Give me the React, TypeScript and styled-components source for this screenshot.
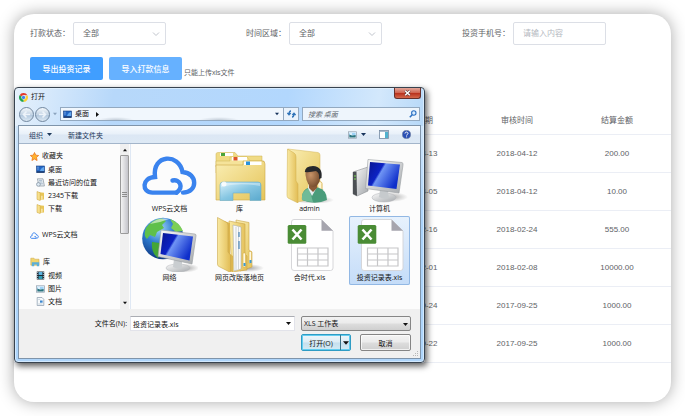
import React from "react";
import styled, { createGlobalStyle } from "styled-components";

const PAGE_FONT = '"Liberation Sans", "Noto Sans CJK SC", sans-serif';
const DIALOG_FONT = '"Open Sans", "Noto Sans CJK SC", sans-serif';

const GlobalStyle = createGlobalStyle`
  *, *::before, *::after { box-sizing: border-box; }
  body { margin: 0; background: #fff; font-family: ${PAGE_FONT}; }
  button, input, select { font-family: inherit; margin: 0; }
  svg { display: block; flex: none; }
`;

/* ---------- page ---------- */

const Page = styled.div`
  padding: 14px;
`;

const Card = styled.main`
  position: relative;
  padding: 8px 0 39px;
  border-radius: 20px;
  background: #fff;
  box-shadow: 0 0 16px rgba(0, 0, 0, 0.34);
  font-size: 8px;
  line-height: 12px;
  color: #606266;
`;

const Filters = styled.form`
  display: grid;
  grid-template-columns: 1fr 1fr 209px;
  padding-left: 16px;
`;

const Filter = styled.div`
  display: flex;
  align-items: center;
  gap: 3px;
`;

const FieldShell = styled.span`
  position: relative;
  display: block;
  width: 93px;
  svg {
    position: absolute;
    right: 6px;
    top: 8px;
    pointer-events: none;
  }
`;

const fieldStyle = `
  display: block;
  width: 100%;
  height: 23px;
  padding: 0 9px;
  border: 1px solid #dcdfe6;
  border-radius: 2px;
  background: #fff;
  color: #606266;
  font-size: 8px;
  outline: none;
`;

const FilterSelect = styled.select`
  ${fieldStyle}
  appearance: none;
`;

const FilterInput = styled.input`
  ${fieldStyle}
  &::placeholder { color: #b4b8c0; }
`;

const Actions = styled.div`
  display: flex;
  gap: 6px;
  padding: 12px 16px 0;
`;

const ActionButton = styled.button<{ $light?: boolean }>`
  width: 73px;
  height: 23px;
  padding: 0;
  border: 0;
  border-radius: 2px;
  background: ${(p) => (p.$light ? "#66b1ff" : "#409eff")};
  color: #fff;
  font-size: 8px;
  font-weight: 500;
`;

const UploadGroup = styled.div`
  display: flex;
  align-items: flex-end;
  gap: 2px;
`;

const Hint = styled.span`
  font-size: 7px;
  line-height: 14px;
`;

const Records = styled.table`
  width: 100%;
  margin-top: 27px;
  border-collapse: separate;
  border-spacing: 0;
  table-layout: fixed;
  text-align: center;
  th, td {
    height: 38px;
    padding: 0;
    border-bottom: 1px solid #ebeef5;
    font-weight: 400;
  }
  thead th, thead td { height: 28px; }
  th:last-child, td:last-child { padding-right: 4px; }
`;

const SpacerCol = styled.col``;
const DataCol = styled.col<{ $last?: boolean }>`
  width: ${(p) => (p.$last ? "104px" : "100px")};
`;

/* ---------- dialog ---------- */

const Dialog = styled.section`
  position: absolute;
  left: 0;
  top: 73px;
  width: 411px;
  padding: 0 3px 3px;
  border: 1px solid #38434f;
  border-radius: 4px;
  background:
    linear-gradient(100deg, #e6f1fc 0, #b7d8fa 24%, #b2d7fd 66%, #d3e8fc 88%, #b6d8f8 100%) top / 100% 38px no-repeat,
    linear-gradient(#dcecfb, #a9d2fa 50%, #aed5fb);
  box-shadow: inset 0 0 0 1px rgba(235, 247, 255, 0.6), 2px 3px 6px rgba(0, 0, 0, 0.65);
  font-family: ${DIALOG_FONT};
  font-size: 7px;
  line-height: 10px;
  color: #111;
`;

const TitleBar = styled.header`
  display: flex;
  align-items: center;
  gap: 3px;
  height: 18px;
  padding-left: 1px;
`;

const Title = styled.h2`
  flex: 1;
  margin: 0;
  font-size: 7px;
  font-weight: 400;
`;

const CloseButton = styled.button`
  display: grid;
  place-items: center;
  align-self: flex-start;
  width: 27px;
  height: 11px;
  padding: 0;
  border: 1px solid #66302c;
  border-top: 0;
  border-radius: 0 0 3px 3px;
  background: linear-gradient(#e3a79a, #cf6350 48%, #b8301c 52%, #d4684c);
`;

const NavRow = styled.div`
  display: flex;
  align-items: center;
  gap: 3px;
  height: 19px;
  padding: 0 1px 3px;
`;

const HistoryButtons = styled.div`
  display: flex;
  gap: 1px;
`;

const HistoryButton = styled.button`
  display: grid;
  place-items: center;
  width: 15px;
  height: 15px;
  padding: 0;
  border: 1px solid #71879f;
  border-radius: 50%;
  background: linear-gradient(#f4f8fc, #c4d4e4 50%, #b0c6dc 52%, #dbe8f4);
`;

const AddressBar = styled.div`
  display: flex;
  align-items: stretch;
  flex: 1;
  height: 14px;
  border: 1px solid #93a9c0;
  background:
    radial-gradient(ellipse 18px 3px at 55px 100%, #c3cdd8, transparent),
    radial-gradient(ellipse 20px 3px at 158px 100%, #c3cdd8, transparent),
    #f1f7fd;
`;

const Crumb = styled.div`
  display: flex;
  align-items: center;
  flex: 1;
  gap: 3px;
  padding: 0 4px 0 2px;
  svg:nth-of-type(2) { margin-left: 3px; }
  svg:last-child { margin-left: auto; }
`;

const RefreshButton = styled.button`
  display: grid;
  place-items: center;
  width: 15px;
  padding: 0;
  border: 0;
  border-left: 1px solid #93a9c0;
  background: #eaf3fc;
`;

const SearchBox = styled.label`
  display: flex;
  align-items: center;
  width: 118px;
  height: 14px;
  padding: 0 2px 0 5px;
  border: 1px solid #93a9c0;
  background: #eef5fc;
  input {
    flex: 1;
    min-width: 0;
    padding: 0;
    border: 0;
    outline: none;
    background: transparent;
    font-size: 7px;
    font-style: italic;
  }
  input::placeholder { color: #5f6870; }
`;

const Client = styled.div`
  border: 1px solid #7f94aa;
  background: #f0f0f0;
`;

const Toolbar = styled.div`
  display: flex;
  align-items: center;
  gap: 16px;
  height: 18px;
  padding: 0 9px 0 10px;
  border-bottom: 1px solid #a3b5ca;
  background: linear-gradient(#f8fbfe, #e8f0f9 48%, #dce7f4 52%, #dde9f5);
`;

const ToolGroup = styled.div`
  display: flex;
  align-items: center;
  gap: 13px;
  margin-left: auto;
`;

const ToolButton = styled.button`
  display: flex;
  align-items: center;
  gap: 4px;
  padding: 0;
  border: 0;
  background: none;
  color: #1e395b;
  font-size: 7px;
`;

const Browser = styled.div`
  display: flex;
  height: 165px;
  background: #fcfcfc;
`;

const Sidebar = styled.nav`
  display: flex;
  width: 112px;
  border-right: 1px solid #dfe8f4;
`;

const Tree = styled.div`
  display: flex;
  flex-direction: column;
  flex: 1;
  gap: 13px;
  padding: 5px 0 0 11px;
  overflow: hidden;
`;

const TreeGroup = styled.div`
  display: flex;
  flex-direction: column;
`;

const TreeRow = styled.a<{ $child?: boolean }>`
  display: flex;
  align-items: center;
  gap: 3px;
  height: ${(p) => (p.$child ? "13px" : "14px")};
  padding-left: ${(p) => (p.$child ? "6px" : "0")};
  color: #111;
  text-decoration: none;
  white-space: nowrap;
`;

const Scrollbar = styled.div`
  display: flex;
  flex-direction: column;
  align-items: center;
  justify-content: space-between;
  width: 9px;
  margin-right: 1px;
  padding: 4px 0;
  background: #f0f0f0;
`;

const Thumb = styled.div`
  display: grid;
  place-items: center;
  width: 9px;
  height: 79px;
  margin: 3px 0 auto;
  border: 1px solid #9a9a9a;
  border-radius: 1px;
  background: linear-gradient(90deg, #f3f3f3, #dcdcdf 50%, #c4c4ca);
`;

const Files = styled.div`
  display: grid;
  grid-template-columns: repeat(4, 61px);
  align-content: start;
  column-gap: 9px;
  flex: 1;
  padding: 3px 0 0 8px;
`;

const FileTile = styled.button<{ $selected?: boolean }>`
  display: flex;
  flex-direction: column;
  align-items: center;
  height: 69px;
  padding: 0;
  border: 0;
  border-radius: 2px;
  background: ${(p) => (p.$selected ? "linear-gradient(#e8f2fd, #c4dcf8)" : "none")};
  box-shadow: ${(p) => (p.$selected ? "inset 0 0 0 1px #92b8e4" : "none")};
  color: #111;
  font-size: 7px;
  line-height: 12px;
  white-space: nowrap;
`;

const Footer = styled.form`
  position: relative;
  display: flex;
  flex-direction: column;
  gap: 3px;
  height: 49px;
  padding: 7px 9px 0 0;
`;

const NameRow = styled.div`
  display: flex;
  align-items: center;
  gap: 3px;
  label { flex: 1; text-align: right; }
`;

const ComboBox = styled.div`
  display: flex;
  align-items: center;
  width: 165px;
  height: 15px;
  margin-right: 3px;
  padding: 0 3px 0 2px;
  border: 1px solid #e2e3ea;
  border-top-color: #abadb3;
  background: #fff;
  input {
    flex: 1;
    min-width: 0;
    padding: 0;
    border: 0;
    outline: none;
    background: transparent;
    font-size: 7px;
    color: #111;
  }
`;

const PlainButton = styled.button`
  display: grid;
  place-items: center;
  height: 100%;
  padding: 0;
  border: 0;
  background: none;
`;

const TypeShell = styled.div`
  position: relative;
  width: 110px;
  svg {
    position: absolute;
    right: 3px;
    top: 6px;
    pointer-events: none;
  }
  select {
    display: block;
    width: 100%;
    height: 15px;
    padding: 0 2px;
    border: 1px solid #868686;
    border-radius: 2px;
    appearance: none;
    background: linear-gradient(#f2f2f2, #ebebeb 48%, #dddddd 52%, #cfcfcf);
    font-size: 7px;
    color: #111;
  }
`;

const ButtonRow = styled.div`
  display: flex;
  justify-content: flex-end;
  gap: 9px;
`;

const SplitButton = styled.div`
  display: flex;
  width: 50px;
  height: 17px;
  border: 1px solid #2f9cc4;
  border-radius: 2px;
  background: linear-gradient(#eef6fa, #dcecf5 48%, #c5dfed 52%, #d3ebf5);
  box-shadow: inset 0 0 0 1px #63cdf0;
`;

const OpenButton = styled.button`
  flex: 1;
  padding: 0;
  border: 0;
  border-right: 1px solid #3d7388;
  background: none;
  font-size: 7px;
  color: #111;
`;

const OpenMenuButton = styled(PlainButton)`
  width: 9px;
`;

const CancelButton = styled.button`
  width: 51px;
  height: 17px;
  padding: 0;
  border: 1px solid #858585;
  border-radius: 2px;
  background: linear-gradient(#f3f3f3, #ebebeb 48%, #dddddd 52%, #cfcfcf);
  box-shadow: inset 0 0 0 1px rgba(255, 255, 255, 0.7);
  font-size: 7px;
  color: #111;
`;

const Grip = styled.span`
  position: absolute;
  right: 1px;
  bottom: 1px;
`;

/* ---------- small icons ---------- */

const Chevron = () => (
  <svg width="8" height="8" viewBox="0 0 8 8" fill="none" stroke="#c0c4cc" strokeWidth="1">
    <path d="M1 2.5 4 5.5 7 2.5" />
  </svg>
);

const Arrow = ({ dir = "down", size = 5, color = "#111" }: { dir?: "down" | "up" | "right"; size?: number; color?: string }) => {
  const d = { down: "M0 1h5L2.5 4z", up: "M0 4h5L2.5 1z", right: "M1 0v5L4 2.5z" }[dir];
  return (
    <svg width={size} height={size} viewBox="0 0 5 5" fill={color}>
      <path d={d} />
    </svg>
  );
};

const ChromeIcon = () => (
  <svg width="9" height="9" viewBox="0 0 18 18">
    <path d="M9 9 1.2 4.5A9 9 0 0 1 16.8 4.5H9z" fill="#e33b2e" />
    <path d="M9 9 16.8 4.5A9 9 0 0 1 9 18z" fill="#fdd035" />
    <path d="M9 9V18A9 9 0 0 1 1.2 4.5z" fill="#21a350" />
    <circle cx="9" cy="9" r="4.3" fill="#fff" />
    <circle cx="9" cy="9" r="3.3" fill="#3f83ef" />
  </svg>
);

const HistoryArrow = ({ back }: { back?: boolean }) => (
  <svg width="9" height="9" viewBox="0 0 9 9" fill="none" stroke="#eef4fa" strokeWidth="1.6">
    <path d={back ? "M8 4.5H2M4.5 1.5 1.5 4.5 4.5 7.5" : "M1 4.5H7M4.5 1.5 7.5 4.5 4.5 7.5"} />
  </svg>
);

const DesktopIcon = () => (
  <svg width="9" height="9" viewBox="0 0 9 9">
    <rect x=".5" y="1" width="8" height="6.5" fill="#2366c4" stroke="#173f80" strokeWidth=".6" />
    <path d="M4 6C5 3 7 2 8 2v4z" fill="#63a8ee" />
    <path d="M1 7h7.5" stroke="#14264a" />
    <path d="M1.5 2.2h1M1.5 4h1" stroke="#cfe5ff" strokeWidth=".8" />
  </svg>
);

const RefreshIcon = () => (
  <svg width="9" height="8" viewBox="0 0 9 8" fill="none" stroke="#2f73b8" strokeWidth="1.3">
    <path d="M4 1Q2 1 2 4M.4 3 2 4.8 3.7 3M5 7Q7 7 7 4M5.3 5 7 3.2 8.6 5" />
  </svg>
);

const SearchIcon = () => (
  <svg width="8" height="8" viewBox="0 0 8 8" fill="none" stroke="#2b70c2">
    <circle cx="4.8" cy="3" r="2.2" fill="#d9edff" strokeWidth="1.1" />
    <path d="M3.2 4.7.8 7.2" strokeWidth="1.5" />
  </svg>
);

const CloseIcon = () => (
  <svg width="7" height="6" viewBox="0 0 7 6" fill="none">
    <path d="M1.2.8 5.8 5.2M5.8.8 1.2 5.2" stroke="#54302e" strokeWidth="2.4" />
    <path d="M1.2.8 5.8 5.2M5.8.8 1.2 5.2" stroke="#fff" strokeWidth="1.5" />
  </svg>
);

const PictureIcon = () => (
  <svg width="9" height="8" viewBox="0 0 9 8">
    <rect x=".5" y=".8" width="8" height="6.4" fill="#fff" stroke="#8b9bab" strokeWidth=".7" />
    <path d="M1.3 1.6h6.4v2.6H1.3z" fill="#9fd3f7" />
    <path d="M1.3 3.4 4 4.5 7.7 4v2.4H1.3z" fill="#28737f" />
    <circle cx="3" cy="3" r=".9" fill="#fff" />
  </svg>
);

const PreviewIcon = () => (
  <svg width="10" height="9" viewBox="0 0 10 9">
    <rect x=".5" y=".5" width="9" height="8" fill="#fff" stroke="#7389a2" strokeWidth=".8" />
    <path d="M6 1h3v7H6z" fill="#52b2cf" />
    <path d="M1 1.5h8" stroke="#abc" />
  </svg>
);

const HelpIcon = () => (
  <svg width="9" height="9" viewBox="0 0 9 9">
    <circle cx="4.5" cy="4.5" r="4.1" fill="#2a4fb4" stroke="#7181a4" strokeWidth=".7" />
    <path d="M3 3.5C3 1.6 6 1.6 6 3.4 6 4.5 4.6 4.4 4.6 5.6M4.6 6.4v.9" fill="none" stroke="#fff" strokeWidth="1" />
  </svg>
);

const StarIcon = () => (
  <svg width="9" height="9" viewBox="0 0 18 18">
    <path d="M9 1 11.5 6.3 17.3 7 13 11l1.2 6L9 14.1 3.8 17 5 11 .7 7l5.8-.7z" fill="#ffb22e" stroke="#e9731a" strokeWidth="1.5" />
  </svg>
);

const RecentIcon = () => (
  <svg width="9" height="9" viewBox="0 0 9 9">
    <path d="M1.4.8H7L8.4 8H3z" fill="#e9eef2" stroke="#87929e" strokeWidth=".7" />
    <path d="M3 2.4h3M3.4 4h3M4 5.8h3" stroke="#8fa9c0" strokeWidth=".7" />
    <circle cx="2.4" cy="6.4" r="1.9" fill="#dce8f2" stroke="#6e7f90" strokeWidth=".6" />
  </svg>
);

const SmallFolder = () => (
  <svg width="9" height="10" viewBox="0 0 9 10">
    <path d="M3 1.2 8 1.8V8.6L3 9z" fill="#e8c557" />
    <path d="M1 .5 4.2 1.8V9.6L1 8.4z" fill="#f7e08d" stroke="#caa23b" strokeWidth=".5" />
    <path d="M5.4 4.8h1v3.8h-1z" fill="#fff6d2" />
  </svg>
);

const CloudShape = ({ size = 56 }: { size?: number }) => (
  <svg width={size} height={size} viewBox="0 0 56 56" fill="none" stroke="#3a83ee" strokeWidth={size < 20 ? 6 : 4.4} strokeLinecap="round">
    <path d="M34.5 45.6H10.500C-.6 45.6-.4 30.5 13 30C10 7 37 6 40.5 25C56 26 56 45.6 41 45.6" />
    <path d="M34.5 45.6C42 40.5 38 31.8 30.5 33.5" />
  </svg>
);

const SmallLibrary = () => (
  <svg width="10" height="10" viewBox="0 0 10 10">
    <path d="M.8 1.2H4l.6 1H9v6H.8z" fill="#f1d56e" stroke="#c9a13a" strokeWidth=".5" />
    <path d="M1.8 5.2h7.4v4H6.8V7.6H4.2v1.6H1.8z" fill="#5bafd9" />
  </svg>
);

const VideoIcon = () => (
  <svg width="9" height="9" viewBox="0 0 9 9">
    <path d="M.8.5h7.4v8H.8z" fill="#1d2833" />
    <path d="M2.6 1h3.8v3H2.6z" fill="#5db3df" />
    <path d="M2.6 5h3.8v3H2.6z" fill="#2f9ab4" />
    <path d="M1.6 1v7M7.4 1v7" stroke="#dfe7ee" strokeWidth=".7" strokeDasharray="1 1" />
  </svg>
);

const DocIcon = () => (
  <svg width="9" height="9" viewBox="0 0 9 9">
    <path d="M1.2.5H6L7.8 2.3V8.5H1.2z" fill="#f7fafc" stroke="#8798ab" strokeWidth=".7" />
    <path d="M4 3.5h2.6v2.2H4z" fill="#3b87cf" />
    <path d="M2.2 2.4h2M2.2 7h4.4" stroke="#a6b5c5" strokeWidth=".6" />
  </svg>
);

const GripIcon = () => (
  <svg width="6" height="6" viewBox="0 0 6 6" fill="#b8b8b8">
    <path d="M4 0h1v1H4zM2 2h1v1H2zM4 2h1v1H4zM0 4h1v1H0zM2 4h1v1H2zM4 4h1v1H4z" />
  </svg>
);

/* ---------- large icons ---------- */

const GradientSheet = styled.svg`
  position: absolute;
`;

const Gradients = () => (
  <GradientSheet width="0" height="0" aria-hidden="true">
    <defs>
      <linearGradient id="folder" x1="0" y1="0" x2="1" y2="1">
        <stop offset="0" stopColor="#faeeb4" />
        <stop offset="1" stopColor="#e5c458" />
      </linearGradient>
      <linearGradient id="flap" x1="0" y1="0" x2="1" y2="0">
        <stop offset="0" stopColor="#f9e9a2" />
        <stop offset="1" stopColor="#e2bd55" />
      </linearGradient>
      <linearGradient id="stand" x1="0" y1="0" x2="1" y2="1">
        <stop offset="0" stopColor="#d9f1fb" />
        <stop offset=".5" stopColor="#86c6e2" />
        <stop offset="1" stopColor="#5aa9cd" />
      </linearGradient>
      <linearGradient id="screen" x1="0" y1="0" x2="1" y2=".5">
        <stop offset="0" stopColor="#0a1590" />
        <stop offset=".42" stopColor="#0c22c4" />
        <stop offset=".48" stopColor="#6f94f4" />
        <stop offset="1" stopColor="#0f2fcb" />
      </linearGradient>
      <linearGradient id="metal" x1="0" y1="0" x2="1" y2="1">
        <stop offset="0" stopColor="#fbfbfb" />
        <stop offset="1" stopColor="#a5a9ad" />
      </linearGradient>
      <radialGradient id="globe" cx=".4" cy=".25" r=".8">
        <stop offset="0" stopColor="#a9ddfb" />
        <stop offset=".45" stopColor="#2e7bd0" />
        <stop offset="1" stopColor="#0a2f78" />
      </radialGradient>
      <radialGradient id="skin" cx=".35" cy=".4" r=".7">
        <stop offset="0" stopColor="#c89468" />
        <stop offset="1" stopColor="#70482a" />
      </radialGradient>
      <radialGradient id="shade">
        <stop offset="0" stopColor="#000" stopOpacity=".35" />
        <stop offset="1" stopColor="#000" stopOpacity="0" />
      </radialGradient>
    </defs>
  </GradientSheet>
);

const LibraryIcon = () => (
  <svg width="56" height="56" viewBox="0 0 56 56">
    <path d="M4 11V7Q4 5.5 6 5.5H23L26 9H50V20H4z" fill="#f0db85" stroke="#cfb252" strokeWidth=".5" />
    <path d="M8 6h13v3H8z" fill="#fff" /><path d="M9 6h4v3H9z" fill="#4aa43a" />
    <path d="M4 14H18V10H35L38 14H52V26H4z" fill="#f5e39a" stroke="#cfb252" strokeWidth=".5" />
    <path d="M20 10h15v3.5H20z" fill="#fff" /><path d="M21.500 10h4v3.500h-4z" fill="#dd5426" />
    <path d="M4 18H31V14H50Q53 14 53 17V53H4z" fill="url(#folder)" stroke="#cfa948" strokeWidth=".6" />
    <path d="M32 14.500h17.500V18H32z" fill="#fff" /><path d="M34 14.500h4V18h-4z" fill="#2a92dc" />
    <path d="M8 38Q8 35 11 35H46Q49 35 49 38V53.500H38V46H21V53.500H8z" fill="url(#stand)" stroke="#6fb0cb" strokeWidth=".6" />
    <path d="M9 40Q26 35 48 39V36H10z" fill="#fff" opacity=".35" />
    <circle cx="12" cy="37" r="2.500" fill="#fff" opacity=".8" />
  </svg>
);

const AdminIcon = () => (
  <svg width="56" height="56" viewBox="0 0 56 56">
    <ellipse cx="32" cy="53" rx="20" ry="4" fill="url(#shade)" />
    <path d="M6 2 36 5.500Q38 6 38 8V51L15 55z" fill="url(#folder)" stroke="#d5b65a" strokeWidth=".5" />
    <path d="M35.500 35.500q4-2 4.500 1v7h-4z" fill="#fff6d6" stroke="#ddb857" />
    <path d="M5.500 2 12 6Q14 7 14 10V34L16 37V56L6 51Q5 50 5 48z" fill="url(#flap)" stroke="#cfae4d" strokeWidth=".5" />
    <path d="M20 53Q19 43 27 40.500H36Q45 43 45 53Q33 58.500 20 53z" fill="#4a9c7b" />
    <path d="M20 53Q19 44 27 41L31 55Q25 55 20 53z" fill="#6fbb98" />
    <path d="M26 41 30 49 35 40V36H27z" fill="#e6eef0" />
    <path d="M27 36h8v5l-4 4-4-4z" fill="#8a5a37" />
    <path d="M23.500 28Q23 20 31 20Q39 20 38.500 29Q37.500 39.500 31 40Q25 39.500 23.500 28z" fill="url(#skin)" />
    <path d="M22.800 25Q23 19 31 19Q41 19.500 39.500 31L37 32Q38 26 34 24Q28 25.500 22.800 25z" fill="#26282b" />
  </svg>
);

const ComputerIcon = () => (
  <svg width="56" height="56" viewBox="0 0 56 56">
    <ellipse cx="38" cy="50" rx="18" ry="5" fill="url(#shade)" />
    <path d="M1 25 4 24 16 20V44L5 49 1 47z" fill="url(#metal)" stroke="#8d9194" strokeWidth=".6" />
    <path d="M1 25 4.500 24.500 5 49 1 47z" fill="#4c5054" />
    <path d="M2 29h2M2 32h2" stroke="#7edb54" strokeWidth="1" />
    <ellipse cx="32" cy="50.500" rx="12" ry="4.500" fill="url(#metal)" stroke="#b2b5b8" strokeWidth=".5" />
    <path d="M28 43 36 44 37 51Q32 53 27 50z" fill="#c6cacd" />
    <path d="M16 12.500 50 15.500Q51.500 16 51 18L47 46 13.500 41.500z" fill="url(#metal)" stroke="#999da1" strokeWidth=".6" />
    <path d="M18 15 48 17.500 44.500 42 16 38.500z" fill="url(#screen)" />
  </svg>
);

const NetworkIcon = () => (
  <svg width="56" height="56" viewBox="0 0 56 56">
    <circle cx="21" cy="22.500" r="20.800" fill="url(#globe)" />
    <path d="M4 12Q10 3 20 2.500L24 5 20 9 22 12 15 16 13 21 8 19 5 23Q1 20 4 12z" fill="#5fc04a" />
    <path d="M10 26 18 27 21 34 16 42Q9 37 10 26z" fill="#44a637" />
    <path d="M28 3Q37 6 41 15L34 16 29 12 31 8z" fill="#7ccf55" />
    <path d="M8 8Q16 1 27 3 17 7 8 8z" fill="#fff" opacity=".55" />
    <ellipse cx="43" cy="52" rx="14" ry="4.500" fill="url(#shade)" />
    <ellipse cx="36" cy="52" rx="12" ry="4" fill="url(#metal)" stroke="#b2b5b8" strokeWidth=".5" />
    <path d="M32 43 40 45 40 52Q36 54 31 51z" fill="#c9cdd0" />
    <path d="M19 14 53 18Q54.500 18.500 54 20L50 48 16 40.500z" fill="url(#metal)" stroke="#999da1" strokeWidth=".6" />
    <path d="M21 17 51 20.500 47.500 44.500 18.500 38z" fill="url(#screen)" />
  </svg>
);

const FolderIcon = () => (
  <svg width="56" height="56" viewBox="0 0 56 56">
    <ellipse cx="36" cy="52" rx="16" ry="4" fill="url(#shade)" />
    <path d="M24 4 37 6.500V34L40 36V51L28 55z" fill="url(#folder)" stroke="#c9a548" strokeWidth=".6" />
    <path d="M17 5 33 8V38L35 40V54L20 56z" fill="url(#flap)" stroke="#c9a548" strokeWidth=".6" />
    <path d="M21 9 29 11V53L22 55z" fill="#fafafa" stroke="#a0a6aa" strokeWidth=".5" />
    <path d="M24 11V54M26.500 11V53" stroke="#b4bcc3" strokeWidth=".6" />
    <path d="M27 16v5M27 25v8" stroke="#4a86b8" strokeWidth="1.200" />
    <path d="M31 37h2.500v14H31zM37 35.500h2.500v12H37z" fill="#fff8dd" stroke="#d6b04b" strokeWidth=".6" />
    <path d="M31.500 47h2v3h-2zM37.500 44h2v3h-2z" fill="#3b9ad4" />
    <path d="M12 5 18 7V38L21 40V56L17 55z" fill="#dcb54e" />
    <path d="M5.500 1.500 14 6Q16 7 16 9V36L18.500 39V56.500L7 50.500Q5.500 50 5.500 48z" fill="url(#flap)" stroke="#cba84b" strokeWidth=".6" />
  </svg>
);

const SheetIcon = () => (
  <svg width="56" height="56" viewBox="0 0 56 56">
    <path d="M12 3.500H39.500L51 15V52Q51 54.500 48.500 54.500H12Q9.500 54.500 9.500 52V6Q9.500 3.500 12 3.500z" fill="#fff" stroke="#d2d2d6" strokeWidth=".9" />
    <path d="M39.500 3.500V14.700H51z" fill="#a6a5ae" />
    <path d="M15.500 32H46V50H15.500zM15.500 38H46M15.500 44H46M25.500 32V50M36 32V50" fill="none" stroke="#c6c6c8" strokeWidth="1.200" />
    <rect x="5.700" y="9" width="18.600" height="18.800" rx="1.500" fill="#4a8c35" />
    <path d="M10.500 13.500 19.500 23.500M19.500 13.500 10.500 23.500" stroke="#fff" strokeWidth="2.600" />
  </svg>
);

/* ---------- data ---------- */

const records = [
  ["2018-04-13", "2018-04-12", "200.00"],
  ["2018-04-05", "2018-04-12", "10.00"],
  ["2018-02-16", "2018-02-24", "555.00"],
  ["2018-02-01", "2018-02-08", "10000.00"],
  ["2017-09-24", "2017-09-25", "1000.00"],
  ["2017-09-22", "2017-09-25", "1000.00"],
];

const tree = [
  {
    label: "收藏夹",
    icon: <StarIcon />,
    items: [
      { label: "桌面", icon: <DesktopIcon /> },
      { label: "最近访问的位置", icon: <RecentIcon /> },
      { label: "2345下载", icon: <SmallFolder /> },
      { label: "下载", icon: <SmallFolder /> },
    ],
  },
  { label: "WPS云文档", icon: <CloudShape size={9} />, items: [] },
  {
    label: "库",
    icon: <SmallLibrary />,
    items: [
      { label: "视频", icon: <VideoIcon /> },
      { label: "图片", icon: <PictureIcon /> },
      { label: "文档", icon: <DocIcon /> },
    ],
  },
];

const files = [
  { label: "WPS云文档", icon: <CloudShape /> },
  { label: "库", icon: <LibraryIcon /> },
  { label: "admin", icon: <AdminIcon /> },
  { label: "计算机", icon: <ComputerIcon /> },
  { label: "网络", icon: <NetworkIcon /> },
  { label: "网页改版落地页", icon: <FolderIcon /> },
  { label: "合时代.xls", icon: <SheetIcon /> },
  { label: "投资记录表.xls", icon: <SheetIcon />, selected: true },
];

function OpenDialog() {
  return (
    <Dialog role="dialog" aria-labelledby="dialog-title">
      <TitleBar>
        <ChromeIcon />
        <Title id="dialog-title">打开</Title>
        <CloseButton type="button" aria-label="关闭"><CloseIcon /></CloseButton>
      </TitleBar>
      <NavRow>
        <HistoryButtons>
          <HistoryButton type="button" aria-label="后退"><HistoryArrow back /></HistoryButton>
          <HistoryButton type="button" aria-label="前进"><HistoryArrow /></HistoryButton>
        </HistoryButtons>
        <Arrow size={4} color="#8ba3bd" />
        <AddressBar>
          <Crumb>
            <DesktopIcon />
            <span>桌面</span>
            <Arrow dir="right" />
            <Arrow size={4} color="#17335c" />
          </Crumb>
          <RefreshButton type="button" aria-label="刷新"><RefreshIcon /></RefreshButton>
        </AddressBar>
        <SearchBox>
          <input type="text" placeholder="搜索 桌面" aria-label="搜索 桌面" />
          <SearchIcon />
        </SearchBox>
      </NavRow>
      <Client>
        <Toolbar>
          <ToolButton type="button">组织 <Arrow color="#1e395b" /></ToolButton>
          <ToolButton type="button">新建文件夹</ToolButton>
          <ToolGroup>
            <ToolButton type="button" aria-label="更改视图">
              <PictureIcon />
              <Arrow color="#17335c" />
            </ToolButton>
            <ToolButton type="button" aria-label="预览窗格"><PreviewIcon /></ToolButton>
            <ToolButton type="button" aria-label="帮助"><HelpIcon /></ToolButton>
          </ToolGroup>
        </Toolbar>
        <Browser>
          <Sidebar>
            <Tree>
              {tree.map((group) => (
                <TreeGroup key={group.label}>
                  <TreeRow href="#">{group.icon}{group.label}</TreeRow>
                  {group.items.map((item) => (
                    <TreeRow href="#" $child key={item.label}>{item.icon}{item.label}</TreeRow>
                  ))}
                </TreeGroup>
              ))}
            </Tree>
            <Scrollbar>
              <Arrow dir="up" size={4} />
              <Thumb>
                <svg width="5" height="5" viewBox="0 0 5 5" stroke="#777" strokeWidth=".8"><path d="M0 .5h5M0 2.500h5M0 4.500h5" /></svg>
              </Thumb>
              <Arrow size={4} />
            </Scrollbar>
          </Sidebar>
          <Files>
            {files.map((file) => (
              <FileTile type="button" key={file.label} $selected={file.selected}>
                {file.icon}
                {file.label}
              </FileTile>
            ))}
          </Files>
        </Browser>
        <Footer onSubmit={(e) => e.preventDefault()}>
          <NameRow>
            <label htmlFor="file-name">文件名(N):</label>
            <ComboBox>
              <input id="file-name" type="text" defaultValue="投资记录表.xls" />
              <PlainButton type="button" aria-label="最近的文件名"><Arrow size={5} /></PlainButton>
            </ComboBox>
            <TypeShell>
              <select aria-label="文件类型" defaultValue="xls">
                <option value="xls">XLS 工作表</option>
              </select>
              <Arrow size={5} />
            </TypeShell>
          </NameRow>
          <ButtonRow>
            <SplitButton>
              <OpenButton type="submit">打开(O)</OpenButton>
              <OpenMenuButton type="button" aria-label="打开方式"><Arrow size={6} /></OpenMenuButton>
            </SplitButton>
            <CancelButton type="button">取消</CancelButton>
          </ButtonRow>
          <Grip><GripIcon /></Grip>
        </Footer>
      </Client>
    </Dialog>
  );
}

export default function App() {
  return (
    <Page>
      <GlobalStyle />
      <Gradients />
      <Card>
        <Filters onSubmit={(e) => e.preventDefault()}>
          <Filter>
            <label htmlFor="status">打款状态：</label>
            <FieldShell>
              <FilterSelect id="status" defaultValue="all"><option value="all">全部</option></FilterSelect>
              <Chevron />
            </FieldShell>
          </Filter>
          <Filter>
            <label htmlFor="period">时间区域：</label>
            <FieldShell>
              <FilterSelect id="period" defaultValue="all"><option value="all">全部</option></FilterSelect>
              <Chevron />
            </FieldShell>
          </Filter>
          <Filter>
            <label htmlFor="phone">投资手机号：</label>
            <FieldShell>
              <FilterInput id="phone" type="text" placeholder="请输入内容" />
            </FieldShell>
          </Filter>
        </Filters>
        <Actions>
          <ActionButton type="button">导出投资记录</ActionButton>
          <UploadGroup>
            <ActionButton type="button" $light>导入打款信息</ActionButton>
            <Hint>只能上传xls文件</Hint>
          </UploadGroup>
        </Actions>
        <Records>
          <colgroup>
            <SpacerCol />
            <DataCol />
            <DataCol />
            <DataCol $last />
          </colgroup>
          <thead>
            <tr>
              <td />
              <th scope="col">结算日期</th>
              <th scope="col">审核时间</th>
              <th scope="col">结算金额</th>
            </tr>
          </thead>
          <tbody>
            {records.map(([due, reviewed, amount]) => (
              <tr key={due}>
                <td />
                <td>{due}</td>
                <td>{reviewed}</td>
                <td>{amount}</td>
              </tr>
            ))}
          </tbody>
        </Records>
        <OpenDialog />
      </Card>
    </Page>
  );
}
